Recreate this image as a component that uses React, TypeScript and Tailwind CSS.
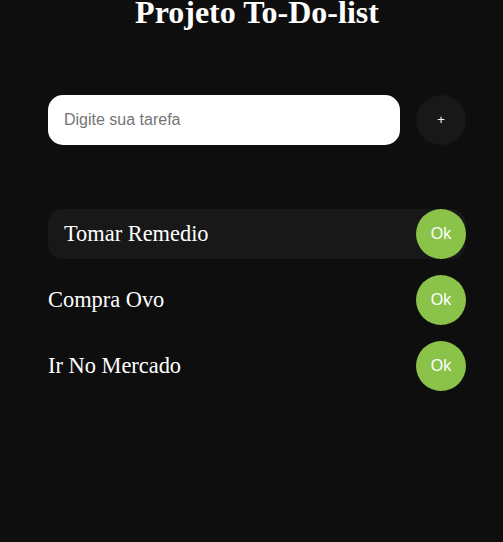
import React, { useState } from "react";

const App = () => {
  const [tasks, setTasks] = useState(["Tomar Remedio", "Compra Ovo", "Ir No Mercado"]);
  const [text, setText] = useState("");

  return (
    <div className="min-h-[542px] w-full bg-[#0e0e0e] text-white" style={{ fontFamily: '"Liberation Serif", serif' }}>
      <div className="ml-[48px] w-[418px] flex flex-col">
        {/* Title */}
        <h1 className="text-[32px] font-bold leading-[24px] text-center">Projeto To-Do-list</h1>

        {/* Input row */}
        <div className="flex items-center gap-4 mt-[71px]">
          <input
            value={text}
            onChange={(e) => setText(e.target.value)}
            placeholder="Digite sua tarefa"
            className="h-[50px] flex-1 rounded-[15px] bg-white px-4 text-[16px] text-black placeholder:text-[#757575] outline-none font-['Liberation_Sans',sans-serif]"
          />
          <button
            onClick={() => {
              if (text.trim()) setTasks([...tasks, text.trim()]);
              setText("");
            }}
            className="w-[50px] h-[50px] rounded-full bg-[#181818] text-white text-[13px] font-['Liberation_Sans',sans-serif]"
          >
            +
          </button>
        </div>

        {/* Tasks */}
        <div className="flex flex-col gap-4 mt-16">
          {tasks.map((task, i) => (
            <div
              key={i}
              className={`flex items-center justify-between h-[50px] rounded-[15px] ${i === 0 ? "bg-[#181818] pl-4" : ""}`}
            >
              <span className="text-[22.4px]">{task}</span>
              <button
                onClick={() => setTasks(tasks.filter((_, j) => j !== i))}
                className="w-[50px] h-[50px] rounded-full bg-[#8bc34a] text-white text-[16px] font-['Liberation_Sans',sans-serif]"
              >
                Ok
              </button>
            </div>
          ))}
        </div>
      </div>
    </div>
  );
};

export default App;
